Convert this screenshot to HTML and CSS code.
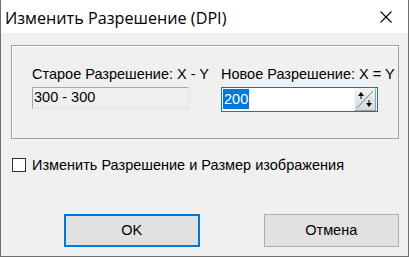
FILE: index.html
```html
<!DOCTYPE html>
<html>
  <head>
    <title>Изменить Разрешение (DPI)</title>
    <meta http-equiv="Content-Type" content="text/html; charset=UTF-8">
    <link rel="stylesheet" href="styles.css">
  </head>
  <body>
    <div class="dialog">
      <div class="titleBar">
        <span class="titleText">Изменить Разрешение (DPI)</span>
        <svg class="closeIcon" width="12" height="12" viewBox="0 0 12 12">
          <path d="M0.5 0.5 L11.5 11.5 M11.5 0.5 L0.5 11.5" stroke="#000" stroke-width="1.1" fill="none"/>
        </svg>
      </div>

      <div class="content">
        <div class="groupBox">
          <div class="field oldField">
            <div class="label">Старое Разрешение: X - Y</div>
            <div class="readOnly">300 - 300</div>
          </div>
          <div class="field newField">
            <div class="label">Новое Разрешение: X = Y</div>
            <div class="spinEdit">
              <span class="selected">200</span>
              <span class="spinButton">
                <svg width="20" height="21" viewBox="0 0 20 21">
                  <path d="M2 19 L18 2" stroke="#7a7a7a" stroke-width="1" fill="none"/>
                  <path d="M6 3 L3 7 L9 7 Z" fill="#000"/>
                  <rect x="5.5" y="6" width="1" height="4" fill="#000"/>
                  <path d="M14 18 L11 14 L17 14 Z" fill="#000"/>
                  <rect x="13.5" y="11" width="1" height="4" fill="#000"/>
                </svg>
              </span>
            </div>
          </div>
        </div>

        <label class="checkRow">
          <span class="checkBox"></span>
          <span>Изменить Разрешение и Размер изображения</span>
        </label>

        <div class="buttons">
          <div class="button default">OK</div>
          <div class="button">Отмена</div>
        </div>
      </div>
    </div>
  </body>
</html>
```

FILE: styles.css
```css
html, body {
  margin: 0;
  padding: 0;
}
body {
  width: 409px;
  height: 257px;
  font-family: "Liberation Sans", Arial, sans-serif;
  font-size: 14.5px;
  color: #000;
}
.dialog {
  box-sizing: border-box;
  width: 409px;
  height: 257px;
  border: 1px solid #6f6f6f;
  border-top: none;
  background-color: #f0f0f0;
  display: flex;
  flex-direction: column;
}
.titleBar {
  height: 33px;
  background-color: #fff;
  display: flex;
  align-items: center;
  padding-left: 4px;
  padding-right: 16px;
}
.titleText {
  flex: 1;
  font-family: "Open Sans", "Noto Sans", sans-serif;
  font-size: 16.2px;
  padding-top: 2px;
}
.closeIcon { display: block; margin-top: 1px; }

.content {
  flex: 1;
  padding: 12px 9px 0 10px;
}
.groupBox {
  box-sizing: border-box;
  height: 94px;
  border: 1px solid #a0a0a0;
  box-shadow: inset 1px 1px 0 #fff;
  display: flex;
  padding: 20px 0 0 20px;
}
.oldField { width: 189px; }
.label {
  height: 21px;
  line-height: 17px;
}
.readOnly {
  box-sizing: border-box;
  width: 157px;
  height: 22px;
  border: 1px solid #a8a8a8;
  border-right-color: #e3e3e3;
  border-bottom-color: #e3e3e3;
  line-height: 18px;
  padding-left: 1px;
}
.spinEdit {
  box-sizing: border-box;
  width: 157px;
  height: 25px;
  border: 1px solid #0078d7;
  background-color: #fff;
  display: flex;
  align-items: flex-start;
  padding: 1px 1px 0 1px;
}
.selected {
  background-color: #0078d7;
  color: #fff;
  line-height: 20px;
  padding: 0 1px;
  flex: 0 0 auto;
}
.spinButton {
  margin-left: auto;
  width: 22px;
  height: 23px;
  box-sizing: border-box;
  border: 1px solid #9c9c9c;
  border-top-color: #f5f5f5;
  border-left-color: #f5f5f5;
  background: linear-gradient(#f2f2f2, #d8d8d8);
  margin-top: -1px;
}
.spinButton svg { display: block; }

.checkRow {
  display: flex;
  align-items: center;
  margin-top: 18px;
  margin-left: 1px;
  height: 15px;
}
.checkBox {
  box-sizing: border-box;
  width: 14px;
  height: 14px;
  border: 1px solid #333;
  background-color: #fff;
  margin-right: 6px;
}

.buttons {
  display: flex;
  margin-top: 42px;
  padding-left: 53px;
  gap: 64px;
}
.button {
  box-sizing: border-box;
  width: 136px;
  height: 33px;
  background-color: #e1e1e1;
  border: 1px solid #adadad;
  text-align: center;
  line-height: 31px;
}
.button.default {
  border: 2px solid #0078d7;
  line-height: 29px;
}
```
